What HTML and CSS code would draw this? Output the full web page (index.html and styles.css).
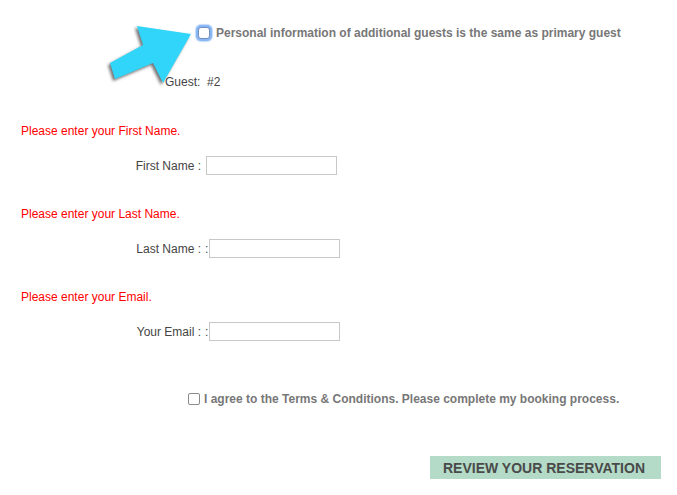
FILE: index.html
```html
<!DOCTYPE html>
<html>
<head>
<meta charset="utf-8">
<link rel="stylesheet" href="styles.css">
</head>
<body>
<div class="page">
  <svg class="arrow" width="110" height="80" viewBox="0 0 110 80">
    <polygon points="91,14 37,6 43,25 10,43 15,59 53,43 63,63" fill="#31d5fa"/>
  </svg>
  <div class="same-row">
    <span class="cb cb-focus"></span>
    <span class="bold-label">Personal information of additional guests is the same as primary guest</span>
  </div>
  <div class="guest">Guest:&nbsp; #2</div>

  <div class="error first">Please enter your First Name.</div>
  <div class="field">
    <span class="lbl">First Name :</span>
    <span class="ctl"><input class="txt" type="text"></span>
  </div>

  <div class="error">Please enter your Last Name.</div>
  <div class="field">
    <span class="lbl">Last Name :</span>
    <span class="ctl"><span class="colon">:</span><input class="txt" type="text"></span>
  </div>

  <div class="error">Please enter your Email.</div>
  <div class="field">
    <span class="lbl">Your Email :</span>
    <span class="ctl"><span class="colon">:</span><input class="txt" type="text"></span>
  </div>

  <div class="agree-row">
    <span class="cb cb-small"></span>
    <span class="bold-label">I agree to the Terms &amp; Conditions. Please complete my booking process.</span>
  </div>

  <div class="btn-row">
    <button class="btn">REVIEW YOUR RESERVATION</button>
  </div>
</div>
</body>
</html>
```

FILE: styles.css
```css
html, body {
  margin: 0;
  padding: 0;
  background: #fff;
}
.page {
  position: relative;
  display: flow-root;
  box-sizing: border-box;
  width: 677px;
  height: 495px;
  padding-top: 25px;
  overflow: hidden;
  font-family: "Liberation Sans", Arial, sans-serif;
  font-size: 12px;
  color: #444;
}
.arrow {
  position: absolute;
  left: 100px;
  top: 20px;
  filter: drop-shadow(-2px 2px 1.5px rgba(0,0,0,0.55));
}
.same-row {
  display: flex;
  align-items: center;
  padding-left: 198px;
  height: 16px;
}
.cb {
  display: inline-block;
  box-sizing: border-box;
  background: #fff;
  flex: none;
}
.cb-focus {
  width: 12px;
  height: 12px;
  border: 1px solid #6f8fc0;
  border-radius: 3px;
  box-shadow: 0 0 0 2px #8ab6f3, 0 0 1px 3px rgba(138,182,243,0.5);
  margin-right: 6px;
}
.bold-label {
  font-weight: bold;
  color: #777;
  line-height: 16px;
}
.guest {
  margin-top: 33px;
  padding-left: 165px;
  line-height: 16px;
}
.error {
  color: #f00;
  padding-left: 21px;
  line-height: 16px;
  margin-top: 31px;
}
.error.first {
  margin-top: 33px;
}
.field {
  display: flex;
  align-items: center;
  margin-top: 17px;
  height: 19px;
}
.lbl {
  width: 201px;
  text-align: right;
  flex: none;
}
.ctl {
  display: flex;
  align-items: center;
  padding-left: 4px;
}
.colon {
  width: 3px;
}
.txt {
  box-sizing: border-box;
  width: 131px;
  height: 19px;
  margin: 0 0 0 1px;
  padding: 0;
  border: 1px solid #c8c8c8;
  background: #fff;
}
.agree-row {
  display: flex;
  align-items: center;
  margin-top: 50px;
  padding-left: 188px;
  height: 16px;
}
.cb-small {
  width: 12px;
  height: 12px;
  border: 1px solid #8a8a8a;
  border-radius: 2px;
  margin-right: 4px;
}
.btn-row {
  margin-top: 49px;
  padding-left: 430px;
}
.btn {
  width: 231px;
  height: 23px;
  border: none;
  background: #b3dbc7;
  font-family: "Liberation Sans", Arial, sans-serif;
  font-weight: bold;
  font-size: 14px;
  color: #4a4a4a;
  text-align: left;
  padding: 0 0 0 13px;
  margin: 0;
}
```
